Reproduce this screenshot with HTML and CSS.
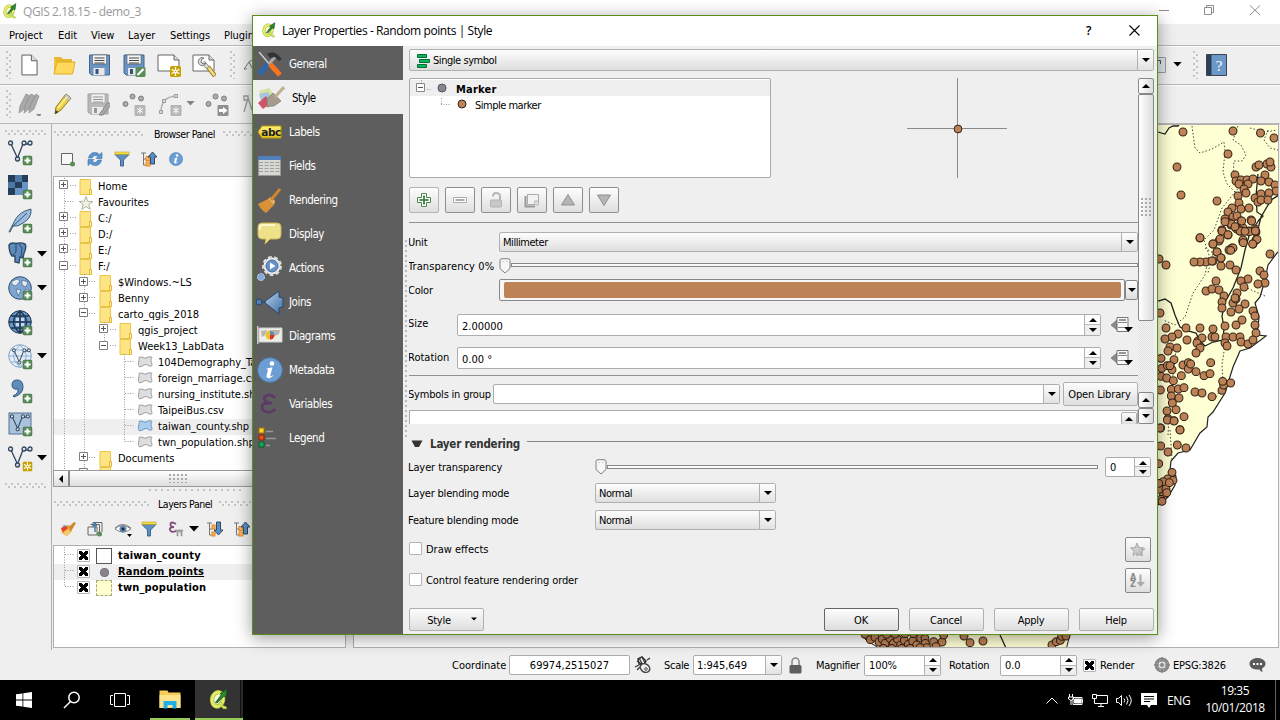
FILE: index.html
```html
<!DOCTYPE html>
<html lang="en">
<head>
<meta charset="utf-8">
<title>QGIS 2.18.15 - demo_3</title>
<link rel="stylesheet" href="styles.css">
</head>
<body>
<svg class="defs" width="0" height="0">
<defs>
<linearGradient id="gb" x1="0" y1="0" x2="1" y2="1"><stop offset="0" stop-color="#b9d4ec"/><stop offset="1" stop-color="#3d6ea5"/></linearGradient>
<linearGradient id="gy" x1="0" y1="0" x2="0" y2="1"><stop offset="0" stop-color="#fff27a"/><stop offset="1" stop-color="#e0c020"/></linearGradient>
<symbol id="qgis" viewBox="0 0 16 16"><ellipse cx="7" cy="8.300" rx="4" ry="5.200" transform="rotate(12 7 8.300)" fill="#fbfcea" stroke="#a9b83c" stroke-width="3.200"/><ellipse cx="7" cy="8.300" rx="4" ry="5.200" transform="rotate(12 7 8.300)" fill="none" stroke="#e2ee66" stroke-width="2.200"/><path d="m8 11 3 4h2.500l-.5-1.500-2-.5-1.500-3z" fill="#e2ee66" stroke="#a9b83c" stroke-width=".6"/><path d="m5.500 10.500 4.500-6-1.200-.4 5-3.400-.8 6-1.300-.8-5 5z" fill="#2b8a2e" stroke="#14501a" stroke-width=".6"/></symbol>
<symbol id="plus" viewBox="0 0 10 10"><rect x=".5" y=".5" width="9" height="9" rx="1.500" fill="#5a8c5a" stroke="#477747"/><path d="M5 2v6M2 5h6" stroke="#fff" stroke-width="2"/></symbol>
<symbol id="sun" viewBox="0 0 10 10"><rect width="10" height="10" rx="1.500" fill="#c8a000"/><path d="M5 1v8M1.500 3l7 4M8.500 3l-7 4" stroke="#fff" stroke-width="1.200"/><circle cx="5" cy="5" r="1.200" fill="#c8a000" stroke="#fff"/></symbol>
<symbol id="folder" viewBox="0 0 14 16"><path d="M1 .5h10.500v10h1v5H1z" fill="#ffe484" stroke="#e8c44a"/><path d="M10.500 10.500h2v5h-2z" fill="#ffeea8" stroke="#e3b93a"/></symbol>
<symbol id="poly" viewBox="0 0 16 12"><path d="M2 1.500c3-2 5 2 8 0 2-1 4-1 5 0-2 3 0 5 0 8-2 2-4-1-6-1-3 0-4 3-7 2C0 8 3 4 2 1.500z"/></symbol>
<symbol id="floppy" viewBox="0 0 22 22"><path d="M1 1h20v20H3l-2-2z" fill="#6b94c4" stroke="#44648c"/><rect x="4" y="1" width="14" height="9" fill="#f4f4f4" stroke="#555" stroke-width=".6"/><path d="M6 4h10M6 6.500h10M6 9h10" stroke="#444"/><rect x="5" y="14" width="11" height="7" fill="#e8e8e8"/><rect x="7" y="15" width="3" height="5" fill="#34527a"/></symbol>
<symbol id="page" viewBox="0 0 18 23"><path d="M1 1h10l6 6v15H1z" fill="#fff" stroke="#555"/><path d="M11 1v6h6" fill="#ddd" stroke="#555"/></symbol>
<symbol id="funnel" viewBox="0 0 16 16"><path d="M1 3.500 6.500 9v6h3V9L15 3.500z" fill="#6090c0" stroke="#3d658f"/><rect x="1" y="1" width="14" height="2.500" fill="#f4dd46" stroke="#b8a020" stroke-width=".6"/></symbol>
<symbol id="info" viewBox="0 0 26 26"><circle cx="13" cy="13" r="12.300" fill="#6d9ed3" stroke="#4c7db4"/><circle cx="15" cy="6.500" r="2.300" fill="#fff"/><path d="M9 12c3-1 4-1.500 6.500-1.500l-2.200 8c0 2 2 0 3-.5-1 3-7.500 5-6.800.5l1.500-6z" fill="#fff"/></symbol>
<symbol id="vec" viewBox="0 0 26 26"><g fill="none" stroke="#33475e" stroke-width="1.300"><path d="M3 4 9.500 18 15 4h6"/><circle cx="2.500" cy="3" r="2" fill="#dce6ef"/><circle cx="9.500" cy="19" r="2" fill="#dce6ef"/><circle cx="16" cy="3" r="2" fill="#dce6ef"/><circle cx="22" cy="3" r="2" fill="#dce6ef"/></g></symbol>
<symbol id="globe" viewBox="0 0 24 24"><circle cx="12" cy="12" r="11.300" fill="#7fa6d0" stroke="#31506f"/></symbol>
<symbol id="tri" viewBox="0 0 10 6"><path d="M0 0h10L5 5.500z" fill="#000"/></symbol>
<symbol id="up" viewBox="0 0 8 4"><path d="M0 4h8L4 0z" fill="#000"/></symbol>
<symbol id="dn" viewBox="0 0 8 4"><path d="M0 0h8L4 4z" fill="#000"/></symbol>
<symbol id="treeup" viewBox="0 0 16 16"><path d="M0 2h5M2.500 2v12h3M2.500 8h3" fill="none" stroke="#777"/><rect x="5" y="5.500" width="4" height="4" fill="#f7b060" stroke="#e98a20"/><rect x="5" y="11" width="4" height="4" fill="#f7b060" stroke="#e98a20"/><path d="M11.500 1 16 6h-2.500v7h-4V6H7z" fill="#5c8dc0" stroke="#2d4a6d"/></symbol>
<symbol id="treedn" viewBox="0 0 16 16"><path d="M0 2h5M2.500 2v12h3M2.500 8h3" fill="none" stroke="#777"/><rect x="5" y="4" width="3" height="4" fill="#f7b060" stroke="#e98a20"/><rect x="5" y="11" width="3" height="4" fill="#f7b060" stroke="#e98a20"/><path d="M11.500 14 16 9h-2.500V1h-4v8H7z" fill="#5c8dc0" stroke="#2d4a6d"/></symbol>
<symbol id="ddef" viewBox="0 0 22 18"><path d="M0 9l6-5v10z" fill="#8a8a8a" stroke="#666" stroke-width=".6"/><path d="M6 1.500h11v14H6z" fill="#fafafa" stroke="#777"/><path d="M7 6.500h9M7 11.500h6" stroke="#888"/><path d="M8 4h7" stroke="#777" stroke-width="1.500"/><path d="M13 11h9l-4.500 5z" fill="#000"/></symbol>
<symbol id="handle" viewBox="0 0 12 16"><path d="M1 2.500Q1 .7 3 .7h6q2 0 2 1.800v8L6 15 1 10.500z" fill="#f6f6f6" stroke="#808080"/><path d="M3.500 3.500h1M7.500 3.500h1" stroke="#aaa"/></symbol>
<marker id="pt" viewBox="0 0 10 10" markerWidth="9.600" markerHeight="9.600" refX="5" refY="5" markerUnits="userSpaceOnUse"><circle cx="5" cy="5" r="4.100" fill="#bd8255" stroke="#35241a" stroke-width="1.100"/></marker>
<marker id="pt3" viewBox="0 0 10 10" markerWidth="28.800" markerHeight="28.800" refX="5" refY="5" markerUnits="userSpaceOnUse"><circle cx="5" cy="5" r="4.100" fill="#bd8255" stroke="#35241a" stroke-width="1.100"/></marker>
</defs>
</svg>

<header class="titlebar">
  <svg class="i16"><use href="#qgis"/></svg><span>QGIS 2.18.15 - demo_3</span>
  <svg class="winctl" viewBox="0 0 110 20" fill="none" stroke="#8c8c8c"><path d="M3 9.500h10M48.500 6.500h7v7h-7zM50.500 6V4.500h7v7H56M94 4.500l10 9.500M104 4.500 94 14"/></svg>
</header>
<nav class="menubar"><span>Project</span><span>Edit</span><span>View</span><span>Layer</span><span>Settings</span><span>Plugins</span></nav>

<div class="toolbar t1">
  <i class="vgrip"></i>
  <svg viewBox="0 0 24 24"><use href="#page" x="4" y="1" width="17" height="22"/></svg>
  <svg viewBox="0 0 24 24"><path d="M2 4h7l2 2h9v3H2z" fill="#e8b830"/><path d="M2 4v17h18V10H5z" fill="#f2c440"/><path d="M2 21 5 9h18l-2.500 12z" fill="#ffd95c" stroke="#e0ac24"/></svg>
  <svg viewBox="0 0 24 24"><use href="#floppy" x="1.500" y="1" width="22" height="22"/></svg>
  <svg viewBox="0 0 24 24"><use href="#floppy" x="1" y="1" width="22" height="22"/><rect x="13.500" y="14" width="10" height="10" rx="1.500" fill="#5a8c5a"/><path d="m15.500 22 6-6" stroke="#fff" stroke-width="2.200"/></svg>
  <svg viewBox="0 0 24 24"><path d="M1 2h16l5 5v11H1z" fill="#fff" stroke="#666"/><path d="M17 2v5h5" fill="#ddd" stroke="#666"/><use href="#sun" x="13" y="13" width="11" height="11"/></svg>
  <svg viewBox="0 0 24 24"><path d="M1 2h16l5 5v11H1z" fill="#fff" stroke="#666"/><path d="M17 2v5h5" fill="#ddd" stroke="#666"/><path d="m11 9 5 6" stroke="#888" stroke-width="4"/><path d="m11 9 5 6" stroke="#ddd" stroke-width="2.500"/><path d="M12 5a4 4 0 1 0 2 5l-3 1-2-2 1-3z" fill="#ddd" stroke="#777"/><path d="m16 14 7 9" stroke="#9a8030" stroke-width="4.500"/><path d="m16.500 14.500 6 8" stroke="#f2dd80" stroke-width="2.500"/></svg>
  <i class="vgrip"></i>
  <svg class="edge" viewBox="0 0 24 24"><path d="M4 16 9 9l3 6M4 16h3M9 9l5-3" fill="none" stroke="#777"/></svg>
  <div class="tbright">
    <svg class="cut" viewBox="0 0 8 16"><path d="M-4 .5H7.500v15H-4z" fill="#dfe5ea" stroke="#99a"/><path d="M0 3.500h2.500V7" fill="none" stroke="#555"/></svg>
    <svg class="arr"><use href="#tri"/></svg><i class="vgrip"></i>
    <svg class="book" viewBox="0 0 21 22"><path d="M.5.5h20v21H.5z" fill="#6b98c9" stroke="#3b4450"/><path d="M1 1h4.500v20H1z" fill="#2c3e50"/><text x="13" y="17" text-anchor="middle" class="bookq">?</text></svg>
  </div>
</div>
<div class="toolbar t2">
  <i class="vgrip"></i>
  <svg viewBox="0 0 24 24"><g fill="#a9a9a9" stroke="#8b8b8b" stroke-width=".7"><path d="M9 2 3 14l-1 7 5-4L13 4z"/><path d="m14 2-6 12-1 7 5-4 6-13z"/><path d="m19 2-6 12-1 7 5-4 5-13z"/></g><path d="M19 22h6l-3 3z" fill="#888"/></svg>
  <svg viewBox="0 0 24 24"><path d="M16 2 6 15l-1 7 6-4 10-12z" fill="#ecd24a" stroke="#8d7b20"/><path d="m16 2 5 4-2 3-5-4z" fill="#ccc" stroke="#888" stroke-width=".6"/><path d="m5 22 .6-4 3 2z" fill="#444"/><path d="m8 16 9-11" stroke="#fff08a" stroke-width="1.500"/></svg>
  <svg viewBox="0 0 24 24"><g class="off"><use href="#floppy" x="1" y="1" width="22" height="22"/></g><path d="m13 23 9-13 3 3-8 10z" fill="#a8a8a8" stroke="#888"/></svg>
  <svg viewBox="0 0 24 24"><g fill="#aaa" stroke="#7e7e7e"><circle cx="3.500" cy="12" r="2.500"/><circle cx="10.500" cy="4.500" r="2.500"/><circle cx="19" cy="6.500" r="2.500"/></g><rect x="12.500" y="13" width="11" height="11" rx="1" fill="#b5b5b5"/><path d="M18 15v7M15 16.500l6 4M21 16.500l-6 4" stroke="#fff"/></svg>
  <svg viewBox="0 0 24 24"><path d="M3 20Q3 5 18 4" fill="none" stroke="#b0b0b0" stroke-width="1.500"/><g fill="#ddd" stroke="#999"><path d="M1.500 18.500h3v3h-3zM4.500 7.500h3v3h-3zM16.500 2.500h3v3h-3z"/></g><rect x="12.500" y="13" width="11" height="11" rx="1" fill="#b5b5b5"/><path d="M18 15v7M15 16.500l6 4M21 16.500l-6 4" stroke="#fff"/></svg>
  <svg class="arr gray"><use href="#tri"/></svg>
  <svg viewBox="0 0 24 24"><g fill="#aaa" stroke="#7e7e7e"><circle cx="3.500" cy="12" r="2.500"/><circle cx="10.500" cy="4.500" r="2.500"/><circle cx="19" cy="6.500" r="2.500"/></g><rect x="12.500" y="13" width="11" height="11" rx="1" fill="#909090"/><path d="M14 18.500h5" stroke="#fff" stroke-width="3"/><path d="m18 15 4.500 3.500L18 22z" fill="#fff"/></svg>
  <svg class="edge2" viewBox="0 0 24 24"><path d="M3 20 7 6l4 12M3 4h4v4H3zM12 4l3 8" fill="none" stroke="#999" stroke-width="1.300"/></svg>
</div>

<main class="work">
  <aside class="lefttools">
    <i class="hgrip"></i>
    <div><svg viewBox="0 0 26 26"><use href="#vec" width="26" height="26"/><use href="#plus" x="14.500" y="15.500" width="10" height="10"/></svg></div>
    <div><svg viewBox="0 0 26 26"><path d="M0 1h20v20H0z" fill="#6795c6"/><path d="M0 1h7v7H0zM14 1h6v7h-6zM7 8h7v6H7zM0 14h7v7H0z" fill="#263e59"/><path d="M7 1h7v7H7zM0 8h7v6H0z" fill="#4d77a5"/><use href="#plus" x="14.500" y="15.500" width="10" height="10"/></svg></div>
    <div><svg viewBox="0 0 26 26"><path d="M1 24 6 14Q10 4 23 1 24 10 15 15 10 19 5 18L2 24z" fill="#9bbcdd" stroke="#3c5b7c"/><path d="M4 19 19 5" stroke="#3c5b7c"/><use href="#plus" x="14.500" y="15.500" width="10" height="10"/></svg></div>
    <div><svg viewBox="0 0 26 26"><path d="M1 3Q3 0 8 1.500 13 0 17 2q2 3-1 9l-1 5-3-1-1 6-4-1V14l-3 0Q1 10 1 3z" fill="#5d8cbd" stroke="#2d4764" stroke-width="1.400"/><path d="M8 2v8l-3 3M11 2l3 4-1 9" fill="none" stroke="#2d4764"/><use href="#plus" x="14.500" y="15.500" width="10" height="10"/></svg><svg class="arr"><use href="#tri"/></svg></div>
    <div><svg viewBox="0 0 26 26"><use href="#globe" y="0" width="24" height="24"/><path d="m3 6 6-3 3 2-4 5-3-1zM14 4l6 2-2 5-4-2zM8 13l5 1-3 6zM17 13l4 1-3 5z" fill="#e4ebf2" stroke="#46688f" stroke-width=".7"/><use href="#plus" x="14.500" y="14.500" width="10" height="10"/></svg><svg class="arr"><use href="#tri"/></svg></div>
    <div><svg viewBox="0 0 26 26"><circle cx="12" cy="12" r="11.300" fill="#6795c6" stroke="#20354d"/><path d="M1 12h22M3 6h18M3 18h18M12 1v22M12 1Q-1 12 12 23M12 1q13 11 0 22" fill="none" stroke="#20354d" stroke-width="1.500"/><path d="M8 8h3v3H8zM13 8h3v3h-3zM8 13h3v3H8zM13 13h3v3h-3z" fill="#c7d9ec"/><use href="#plus" x="14.500" y="15.500" width="10" height="10"/></svg></div>
    <div><svg viewBox="0 0 26 26"><circle cx="12" cy="12" r="11.300" fill="#e4edf6" stroke="#7ca2c8"/><path d="M1 12h22M3 6h18M3 18h18M12 1Q-1 12 12 23M12 1q13 11 0 22" fill="none" stroke="#8eb2d6"/><use href="#vec" x="4" y="4" width="20" height="20"/><use href="#plus" x="14.500" y="15.500" width="10" height="10"/></svg><svg class="arr"><use href="#tri"/></svg></div>
    <div><svg viewBox="0 0 26 26"><path d="M5 18q6-3 5-7-6 1-6-4 0-5 5-5 6 0 6 7 0 7-9 10z" fill="#5d8cbd" stroke="#34577c"/><use href="#plus" x="14.500" y="15.500" width="10" height="10"/></svg></div>
    <div><svg viewBox="0 0 26 26"><rect x="1" y="1" width="22" height="21" fill="#a9c3dd" stroke="#56718d"/><use href="#vec" x="2" y="2" width="21" height="21"/><use href="#plus" x="14.500" y="14.500" width="10" height="10"/></svg></div>
    <div><svg viewBox="0 0 26 26"><use href="#vec" width="26" height="26"/><use href="#sun" x="14.500" y="15.500" width="10" height="10"/></svg><svg class="arr"><use href="#tri"/></svg></div>
    <i class="hgrip last"></i>
  </aside>

  <section class="panels">
    <div class="ptitle"><i class="hgrip"></i><span>Browser Panel</span><i class="hgrip"></i></div>
    <div class="ptools">
      <svg viewBox="0 0 16 16"><path d="M1.500 2.500h11v11h-11z" fill="#f7f7f7" stroke="#666"/><circle cx="12.500" cy="13" r="2.500" fill="#5a8c5a"/></svg>
      <svg viewBox="0 0 16 16"><path d="M1.500 7q1-5.500 6.500-5.500 3 0 4.500 2L15 1.500v6H9l2-2Q7 3 5 7zM14.500 9q-1 5.500-6.500 5.500-3 0-4.500-2L1 14.500v-6h6l-2 2q4 2.500 6-1.500z" fill="#5c94cf" stroke="#3b6ea5" stroke-width=".6"/></svg>
      <svg viewBox="0 0 16 16"><use href="#funnel"/></svg>
      <svg viewBox="0 0 16 16"><use href="#treeup"/></svg>
      <svg viewBox="0 0 16 16"><use href="#info" x="1" y="1" width="14" height="14"/></svg>
    </div>
    <div class="tree browser">
      <svg class="guides" viewBox="54 177 200 293"><g fill="none" stroke="#999" stroke-dasharray="1 1.500"><path d="M64.500 178v292M84.500 274v196M104.500 322v24M124.500 354v88M70 185.500h6M65 201.500h10M70 217.500h6M70 233.500h6M70 249.500h6M70 265.500h6M89 281.500h6M89 297.500h6M89 313.500h6M110 329.500h6M110 345.500h6M125 361.500h10M125 377.500h10M125 393.500h10M125 409.500h10M125 425.500h10M125 441.500h10M89 457.500h6"/></g>
      <g fill="#fff" stroke="#808080"><path d="M59.500 180.500h8v8h-8zM59.500 212.500h8v8h-8zM59.500 228.500h8v8h-8zM59.500 244.500h8v8h-8zM59.500 261.500h8v8h-8zM79.500 277.500h8v8h-8zM79.500 293.500h8v8h-8zM79.500 308.500h8v8h-8zM99.500 324.500h8v8h-8zM99.500 341.500h8v8h-8zM79.500 452.500h8v8h-8zM79.500 468.500h8v8h-8z"/></g>
      <path fill="none" stroke="#555" d="M61 184.500h5M63.500 182v5M61 216.500h5M63.500 214v5M61 232.500h5M63.500 230v5M61 248.500h5M63.500 246v5M61 265.500h5M81 281.500h5M83.500 279v5M81 297.500h5M83.500 295v5M81 312.500h5M101 328.500h5M103.500 326v5M101 345.500h5M81 456.500h5M83.500 454v5"/></svg>
      <div class="r l0"><svg><use href="#folder"/></svg><span>Home</span></div>
      <div class="r l0"><svg class="star" viewBox="0 0 14 14"><path d="m7 .5 1.800 4.800 5 .2-4 3 1.500 5L7 10.500l-4.300 3 1.500-5-4-3 5-.2z" fill="#eef0e4" stroke="#b0b4a0"/></svg><span>Favourites</span></div>
      <div class="r l0"><svg><use href="#folder"/></svg><span>C:/</span></div>
      <div class="r l0"><svg><use href="#folder"/></svg><span>D:/</span></div>
      <div class="r l0"><svg><use href="#folder"/></svg><span>E:/</span></div>
      <div class="r l0"><svg><use href="#folder"/></svg><span>F:/</span></div>
      <div class="r l1"><svg><use href="#folder"/></svg><span>$Windows.~LS</span></div>
      <div class="r l1"><svg><use href="#folder"/></svg><span>Benny</span></div>
      <div class="r l1"><svg><use href="#folder"/></svg><span>carto_qgis_2018</span></div>
      <div class="r l2"><svg><use href="#folder"/></svg><span>qgis_project</span></div>
      <div class="r l2"><svg><use href="#folder"/></svg><span>Week13_LabData</span></div>
      <div class="r l3"><svg><use href="#poly"/></svg><span>104Demography_Taiwan</span></div>
      <div class="r l3"><svg><use href="#poly"/></svg><span>foreign_marriage.csv</span></div>
      <div class="r l3"><svg><use href="#poly"/></svg><span>nursing_institute.shp</span></div>
      <div class="r l3"><svg><use href="#poly"/></svg><span>TaipeiBus.csv</span></div>
      <div class="r l3 sel"><svg><use href="#poly"/></svg><span>taiwan_county.shp</span></div>
      <div class="r l3"><svg><use href="#poly"/></svg><span>twn_population.shp</span></div>
      <div class="r l1"><svg><use href="#folder"/></svg><span>Documents</span></div>
      <div class="r l1"><svg><use href="#folder"/></svg><span>Downloads</span></div>
    </div>
    <div class="hscroll"><b><svg viewBox="0 0 4 8"><path d="M4 0v8L0 4z"/></svg></b><b class="thumb"><i class="hdots"></i></b></div>
    <div class="splith"><i class="hgrip"></i></div>
    <div class="ptitle lay"><i class="hgrip"></i><span>Layers Panel</span><i class="hgrip"></i></div>
    <div class="ptools lt">
      <svg viewBox="0 0 16 16"><path d="m1 7 7-3 4 6-5 5-5-3z" fill="#f0a030"/><path d="m1 7 5-2 2 2-5 4z" fill="#e5402c"/><path d="m3 12 5-4 3 3-4 4z" fill="#f7c86c"/><path d="m8 4 3 6 2-3 3-5-2-1-4 4z" fill="#cf8630"/><path d="m2 5 3-1 2 1-3 1z" fill="#6795c6"/></svg>
      <svg viewBox="0 0 16 16"><path d="M1 6h9v8H1zM3.500 3.500h9v8M6 6V1.500h9V11" fill="none" stroke="#666"/><path d="M8 11V3M6 5l2-3 2 3" fill="none" stroke="#4a7aaa" stroke-width="1.500"/><circle cx="12.500" cy="13" r="2.500" fill="#5a8c5a"/></svg>
      <svg class="eye" viewBox="0 0 18 16"><path d="M1 8Q8 1 17 8 9 14 1 8z" fill="#fff" stroke="#888"/><circle cx="9" cy="8" r="3.500" fill="#5f88b3"/><circle cx="9" cy="8" r="1.500" fill="#223"/><path d="M1 7Q8 0 17 7" fill="none" stroke="#777"/><path d="M13 13h5l-2.500 3z"/></svg>
      <svg viewBox="0 0 16 16"><use href="#funnel"/></svg>
      <svg viewBox="0 0 16 16"><path d="M8 3Q3 0 2.500 3T6 6Q1 6 2 9t6 1" fill="none" stroke="#7d4c7c" stroke-width="1.800"/><path d="M7 9h8l-1 2v4h-1v-4h-3v4H9v-4z" fill="#aaa" stroke="#888" stroke-width=".6"/></svg>
      <svg class="arr"><use href="#tri"/></svg>
      <svg viewBox="0 0 16 16"><use href="#treedn"/></svg>
      <svg viewBox="0 0 16 16"><use href="#treeup"/></svg>
    </div>
    <div class="tree layers">
      <svg class="guides" viewBox="54 547 200 100"><path d="M64.500 548v39.500M65 555.500h9M65 571.500h9M65 587.500h9" fill="none" stroke="#999" stroke-dasharray="1 1.500"/></svg>
      <div class="r"><i class="chk on"></i><em class="sw white"></em><span>taiwan_county</span></div>
      <div class="r sel"><i class="chk on"></i><em class="sw dot"></em><span><u>Random points</u></span></div>
      <div class="r"><i class="chk on"></i><em class="sw yel"></em><span>twn_population</span></div>
    </div>
  </section>

  <section class="map">
    <svg viewBox="354 125 924 523" width="924" height="523">
      <path fill="#ffffd4" stroke="#222" stroke-width="1.200" d="M1140 110H1290V240L1277 253 1268 265 1265 280 1260 297 1255 303 1259 317 1257 335 1266 336 1250 348 1240 351 1233 367 1225 393 1213 412 1208 417 1207 427 1200 433 1190 450 1178 453 1171 461 1170 470 1176 476 1175 485 1168 497 1158 505H1100z"/>
      <path fill="#ffffd4" stroke="#222" d="M858 630l8 10 16 10h184l5-20z"/>
      <g fill="none" stroke="#222" stroke-width="1.300"><path d="M1158 132l7 2 4-6 4-2 5 0 2-3M1158 301l7-2 6 4 4 12 5 12 8 4 8 2 4 8 5 5 8-4 10-2 1-12-2-12 3-14 8-14 8-20 4-18 4-14 6-10 4-6 4-4-6-4-1-16 2-22M1279 195l-8 5-10 17-5 20M1000 635l6 13"/></g>
      <g fill="none" stroke="#444" stroke-dasharray="1.500 2"><path d="M1192 126l3 22 5 5 12-4 12-7 1 10-2 20 4 12 8 8M1238 126l-5 14 8 5 5 10-4 6h-8l-1 15 3 10M1250 128l15 4 12-2M1268 130l-4 10 6 8 8 2M1240 186l-18 22-8 22-10 10 5 15-4 20-12 18-8 24-10 8-12-5M1205 248l8 5-5 20M1225 345l-3 20 1 20-8 14M1170 430l2 30M1176 350l-6 50-2 35M1265 296l-18-8-10-8"/></g>
      <path class="pts" d="M1183 132L1233 131L1260.500 133L1274 138L1228 154L1177 167L1181 195L1217 201L1256 167L1259 165L1267 164L1271 167L1270 162L1235 175L1236 181L1241 180L1247 180L1253 179L1265 175L1261 181L1269 182L1275 185L1276 191L1239 184L1248 184L1244 189L1246 193L1238 196L1255 198L1261 194L1269 193L1258 202L1261 200L1268 200L1239 203L1232 208L1228 212L1241 209L1249 208L1225 219L1233 217L1237 216L1241 221L1231 224L1251 220L1222 230L1236 228L1243 228L1255 229L1200 238L1213 244L1219 241L1222 231L1230 223L1231 225L1237 229L1242 231L1249 231L1256 232L1255 231L1228 235L1243 241L1243 242L1253 244L1256 240L1240 231L1217 252L1232 248L1229 250L1221 258L1213 261L1206 262L1200 262L1194 262L1212 261L1221 266L1230 265L1236 270L1159 259L1166 265L1270 254L1260 271L1264 275L1265 283L1258 284L1248 279L1241 281L1244 287L1237 293L1216 281L1206 291L1212 289L1219 290L1224 296L1222 302L1233 303L1236 299L1235 298L1245 304L1239 309L1231 312L1222 308L1253 311L1255 316L1242 320L1236 325L1225 326L1255 325L1256 333L1160 313L1166 328L1186 328L1200 328L1213 329L1178 334L1172 337L1165 339L1187 340L1198 341L1202 338L1212 337L1215 337L1226 337L1233 337L1240 337L1241 342L1248 344L1253 340L1225 343L1227 346L1197 343L1200 348L1196 353L1170 347L1177 348L1168 351"/>
      <g transform="translate(1060 220) scale(.33333)"><path class="pts3" d="M303 415L305 445L322 437L342 419L336 449L330 437L303 469L320 474L340 482L364 467L369 435L385 428L385 447L392 432L408 455L432 467L450 461L452 428L301 510L334 508L355 507L372 503L334 528L357 534L405 516L426 519L456 530L486 511L491 495L512 489L488 484L337 549L321 573L348 569L324 596L342 602L372 590L302 624L360 629M486 33L514 12L540 33L525 20L568 35L586 33L504 44L549 60L591 58L578 72L550 68L420 53L480 57L459 72L519 84L512 91L471 96L483 114M495 5L545 3L575 3L555 34"/></g>
      <g transform="translate(1100 420) scale(.33333)"><path class="pts3" d="M202 0L222 3L240 30L180 24L182 78L204 96L232 75L258 84L176 131L216 157L203 177L219 181L190 185L178 208L198 207L190 228L183 238L208 188L176 190L200 218L186 244"/></g>
      <g transform="translate(780 430) scale(.33333)"><path class="pts3" d="M255 613L271 629L285 622L297 636L307 627L315 640L330 625L340 640L352 627L362 645L373 631L385 643L398 633L410 645L422 624L435 625L436 640L461 635L486 636L491 615L468 650L440 653L420 653L390 655L365 655L335 655L310 655L320 613L345 612L375 611L400 611L552 618L570 638L609 633L816 645L829 635L841 631L845 619L858 618"/></g>
    </svg>
  </section>
</main>

<footer class="status">
  <span class="s1">Coordinate</span><div class="field coord">69974,2515027</div>
  <svg class="s2" viewBox="0 0 18 18"><path d="m4 3 4-2 4 4-3 5-4-2z" fill="#fff" stroke="#333" stroke-width="1.500"/><path d="m5 2 4 7M3 5l6 4M8 1l3 6M1 11l4-2M13 4l3-2M3 14l3-3" stroke="#333" stroke-width="1.300"/><ellipse cx="11" cy="12" rx="5" ry="4" transform="rotate(35 11 12)" fill="#eee" stroke="#444" stroke-width="1.500"/><circle cx="12" cy="13" r="1.300" fill="none" stroke="#555"/></svg>
  <span class="s3">Scale</span><div class="field combo scale"><span>1:945,649</span><b><svg><use href="#dn"/></svg></b></div>
  <svg class="s4" viewBox="0 0 13 17"><path d="M3 8V4.500a3.500 3.500 0 0 1 7 0V8" fill="none" stroke="#888" stroke-width="1.500"/><rect x=".5" y="8" width="12" height="8.500" rx="1.500" fill="#5e5e5e"/></svg>
  <span class="s5">Magnifier</span><div class="field spin mag"><span>100%</span><b><svg><use href="#up"/></svg><svg><use href="#dn"/></svg></b></div>
  <span class="s6">Rotation</span><div class="field spin rot"><span>0.0</span><b><svg><use href="#up"/></svg><svg><use href="#dn"/></svg></b></div>
  <i class="chk on"></i><span class="s7">Render</span>
  <svg class="s8" viewBox="0 0 16 16"><circle cx="8" cy="8" r="6.500" fill="#bbb" stroke="#888" stroke-width="2"/><path d="M8 0v16M0 8h16M4 4h8v8H4z" fill="none" stroke="#777"/><circle cx="8" cy="8" r="3" fill="none" stroke="#eee"/></svg>
  <span class="s9">EPSG:3826</span>
  <svg class="s10" viewBox="0 0 17 14"><path d="M8.500 0C4 0 .5 2.500.5 5.700s3 5.500 7 5.700h3q1 2 3 2.500l-.5-3.500c2-1 3.500-2.500 3.500-4.700C16.500 2.500 13 0 8.500 0z" fill="#5c5c5c"/><path d="M4 6h2M7.500 6h2M11 6h2" stroke="#fff" stroke-width="2"/></svg>
</footer>

<div class="taskbar">
  <div class="tb"><svg width="16" height="16" viewBox="0 0 16 16" fill="#fff"><path d="M0 2.300 6.500 1.400v6.100H0zM7.300 1.300 16 0v7.500H7.300zM0 8.400h6.500v6.200L0 13.700zM7.300 8.400H16V16l-8.700-1.200z"/></svg></div>
  <div class="tb"><svg width="18" height="18" viewBox="0 0 18 18" fill="none" stroke="#fff" stroke-width="1.500"><circle cx="11" cy="6.500" r="5.200"/><path d="M7.500 10.500 1 17"/></svg></div>
  <div class="tb"><svg width="20" height="16" viewBox="0 0 20 16" fill="none" stroke="#fff"><path d="M4.500 1.500h11v13h-11zM3 3.500H.5v9H3M17 3.500h2.500v9H17"/></svg></div>
  <div class="tb exp"><svg width="22" height="19" viewBox="0 0 22 19"><path d="M.5.500h8l1 2h12V18H.5z" fill="#f5cc55"/><path d="M.5 5h21v13H.5z" fill="#ffe28c"/><path d="M4.500 11h13v7.500h-4V15h-5v3.500h-4z" fill="#1fb0ea"/></svg></div>
  <div class="tb qg"><svg width="22" height="24"><use href="#qgis"/></svg></div>
  <div class="tray">
    <svg width="12" height="7" viewBox="0 0 12 7" fill="none" stroke="#fff"><path d="m.5 6.500 5.500-5.500 5.500 5.500"/></svg>
    <svg width="16" height="12" viewBox="0 0 16 12" fill="none" stroke="#fff"><path d="M5 3.500h9v7H5z"/><path d="M6.500 5H13v4H6.500zM14.500 5.500v3" fill="#fff"/><path d="M1.500 0v3M4.500 0v3M.5 3h5v2L3 6.500.5 5zM3 6v5"/></svg>
    <svg width="16" height="13" viewBox="0 0 16 13" fill="none" stroke="#fff"><path d="M5 1.500h10.500v8H2.500V5M.5.500h4v4h-4zM6 12.500h6M9 10v2"/></svg>
    <svg width="17" height="13" viewBox="0 0 17 13" fill="none" stroke="#fff"><path d="M.5 4.500h2l3-3v10l-3-3h-2zM8 4.500q1.500 2 0 4M10.500 2.500q3 4 0 8M13 1q4.500 5.500 0 11"/></svg>
    <svg width="16" height="15" viewBox="0 0 16 15"><path d="M0 0h16v12h-6l-2 3-2-3H0z" fill="#fff"/><path d="M3 3.500h10M3 6h10M3 8.500h6" stroke="#000"/></svg>
    <span class="eng">ENG</span>
    <div class="clock"><span>19:35</span><span>10/01/2018</span></div><i class="peek"></i>
  </div>
</div>

<div class="dialog">
  <div class="dtitle"><svg class="i16"><use href="#qgis"/></svg><span>Layer Properties - Random points | Style</span><b>?</b><svg class="x" viewBox="0 0 11 11"><path d="m.5.500 10 10M10.500.500l-10 10" stroke="#000" stroke-width="1.100"/></svg></div>
  <div class="dbody">
    <nav class="side">
      <div><svg viewBox="0 0 26 26"><path d="m2 1 12 14" stroke="#ccc" stroke-width="1.500"/><path d="m18 6-8 9" stroke="#aaa" stroke-width="3"/><path d="M10 3q6-4 11 1l4 4-3 2-4-4-5 1z" fill="#333"/><path d="m11 13-9 10" stroke="#2f66a8" stroke-width="5"/><path d="m13 13 10 11" stroke="#f5741c" stroke-width="5"/></svg>General</div>
      <div class="cur"><svg viewBox="0 0 28 26"><path d="m2 6 10-3 6 8-12 4z" fill="#d5e2a0"/><path d="M2 9l9-2 4 6-10 6z" fill="#a5c5e0"/><path d="m1 18 8-7 5 7-8 6z" fill="#d05468"/><path d="m10 14 6-6 8 8-7 5q-4 0-7 1z" fill="#a59c8e" stroke="#80776b" stroke-width=".7"/><path d="m18 12 9-10" stroke="#c3ae91" stroke-width="3"/></svg>Style</div>
      <div><svg viewBox="0 0 26 26"><path d="m1 13 4-6h19v12H5z" fill="url(#gy)" stroke="#b8a000"/><text x="14" y="16.500" text-anchor="middle" class="abc">abc</text></svg>Labels</div>
      <div><svg viewBox="0 0 26 26"><path d="M1.500 3.500h22v19h-22z" fill="#d7dad4" stroke="#999"/><path d="M1 3h23v4H1z" fill="#4f7fbd"/><path d="M2 9.500h21M2 12.500h21M2 15.500h21M2 18.500h21" stroke="#9da19a" stroke-dasharray="4 1.500"/></svg>Fields</div>
      <div><svg viewBox="0 0 26 26"><path d="m1 17 10-5 6 6-8 8q-5-3-8-9z" fill="#d99238"/><path d="m11 12 6 6 1-4-4-4z" fill="#f0b45c"/><path d="m14 13 9-11" stroke="#cd852e" stroke-width="3"/></svg>Rendering</div>
      <div><svg viewBox="0 0 26 26"><path d="M5 2h15q4 0 4 4v8q0 4-4 4h-7l-5 5 1-5H5q-4 0-4-4V6q0-4 4-4z" fill="#efe08a" stroke="#cdb957"/><path d="M3 9V6q0-2 3-2h12" fill="none" stroke="#fff8cc" stroke-width="2"/></svg>Display</div>
      <div><svg viewBox="0 0 26 26"><circle cx="15" cy="11" r="8.500" fill="#f1f1f1" stroke="#ddd" stroke-width="3" stroke-dasharray="3.500 2.500"/><circle cx="15" cy="11" r="6" fill="#6694c8" stroke="#44689a"/><path d="m13 7.500 5.500 3.500-5.500 3.500z" fill="#fff"/><circle cx="4" cy="22" r="3.500" fill="#7facdc" stroke="#ddd" stroke-dasharray="2 1"/></svg>Actions</div>
      <div><svg viewBox="0 0 28 26"><path d="M8 13 23 2v6l4 1v9l-4 1v6z" fill="url(#gb)" stroke="#27476b"/><circle cx="3" cy="13" r="3" fill="#4c7db4" stroke="#27476b"/><path d="M6 13h4" stroke="#27476b"/></svg>Joins</div>
      <div><svg viewBox="0 0 26 26"><path d="M0 3h1.500v18H0z" fill="#ccc"/><path d="M2 5h23v14H2z" fill="#ededE8" stroke="#ccc"/><path d="m4 8 6-1-2 5-3 2zM15 7l8 0-1 4-4 2z" fill="#b5b5ae"/><circle cx="13" cy="12" r="4.500" fill="#f0c030"/><path d="M13 12V7.500a4.500 4.500 0 0 1 4.500 4.500z" fill="#5d8cbd"/><path d="M13 12h4.500a4.500 4.500 0 0 1-4.500 4.500z" fill="#e03020"/></svg>Diagrams</div>
      <div><svg viewBox="0 0 26 26"><use href="#info" width="26" height="26"/></svg>Metadata</div>
      <div><svg viewBox="0 0 26 26"><path d="M18 7Q14 2 9 5T12 12Q5 12 5 16t5 5 8-3M11 12h4" fill="none" stroke="#5d3a66" stroke-width="2.800"/></svg>Variables</div>
      <div><svg viewBox="0 0 26 26"><path d="M2 3h5v5H2z" fill="#f9d81c" stroke="#b07000"/><path d="M2 10h5v5H2z" fill="#e8501c" stroke="#902000"/><path d="M2 17h5v5H2z" fill="#18a85c" stroke="#055a28"/><path d="M9 6.500h7M9 13.500h10M9 20.500h4" stroke="#999" stroke-width="1.500"/></svg>Legend</div>
    </nav>
    <section class="content">
      <div class="btn combo renderer"><span><svg viewBox="0 0 14 14" fill="#08b85c" stroke="#076b35"><path d="M1.500.500h9v3h-9zM3.500 5.500h10v3h-10zM1.500 10.500h9v3h-9z"/></svg>Single symbol</span><b><svg><use href="#dn"/></svg></b></div>
      <div class="scrollwrap">
        <div class="scrollarea">
          <div class="rowA">
            <div class="symtree">
              <svg class="guides" viewBox="410 79 100 40"><path d="M421.500 80v4M427 89.500h5M441.500 98v7M441 104.500h10" fill="none" stroke="#999" stroke-dasharray="1 1.500"/><path d="M416.500 83.500h8v8h-8z" fill="#fff" stroke="#888"/><path d="M418 87.500h5" stroke="#555"/></svg>
              <div class="r sel"><svg viewBox="0 0 10 10"><circle cx="5" cy="5" r="4" fill="#8e8488" stroke="#48586c"/></svg><b>Marker</b></div>
              <div class="r sub"><svg viewBox="0 0 10 10"><circle cx="5" cy="5" r="4" fill="#bd8255" stroke="#35241a"/></svg><span>Simple marker</span></div>
            </div>
            <svg class="preview" viewBox="0 0 102 100"><path d="M0 50.500h100M50.500 0v100" stroke="#8a8a8a"/><circle cx="51" cy="51" r="3.900" fill="#bd8255" stroke="#35241a"/></svg>
          </div>
          <div class="rowB">
            <div class="btn first"><svg viewBox="0 0 16 16"><path d="M5.500 1.500h5v4h4v5h-4v4h-5v-4h-4v-5h4z" fill="#fff" stroke="#4f874f"/><path d="M8 3.500v9M3.500 8h9" stroke="#4f874f" stroke-width="2"/></svg></div>
            <div class="btn"><svg viewBox="0 0 16 16"><path d="M1.500 5.500h13v5h-13z" fill="#fff" stroke="#aaa"/><path d="M3.500 8h9" stroke="#aaa" stroke-width="2"/></svg></div>
            <div class="btn"><svg viewBox="0 0 16 16"><path d="M5 4.500q0-3.500 3-3.500 4 0 4 3.500V8" fill="none" stroke="#b5b5b5" stroke-width="2"/><rect x="2.500" y="8" width="11" height="7" rx="1" fill="#c8c8c8" stroke="#b0b0b0"/></svg></div>
            <div class="btn"><svg viewBox="0 0 16 16"><path d="M1.500 4v10.500H11" fill="none" stroke="#999" stroke-width="2"/><path d="M3.500 2.500h11v10h-11z" fill="#f2f2f2" stroke="#aaa"/><path d="M10.500 9h4v4h-4z" fill="#ddd" stroke="#bbb"/></svg></div>
            <div class="btn"><svg viewBox="0 0 16 16"><path d="M1.500 13h13L8 2.500z" fill="#b5b5b5" stroke="#8f8f8f"/></svg></div>
            <div class="btn"><svg viewBox="0 0 16 16"><path d="M1.500 3h13L8 13.500z" fill="#b5b5b5" stroke="#8f8f8f"/></svg></div>
          </div>
          <hr>
          <div class="row unit"><label>Unit</label><div class="btn combo"><span>Millimeter</span><b><svg><use href="#dn"/></svg></b></div></div>
          <div class="row transp"><label>Transparency 0%</label><div class="slider"><svg><use href="#handle"/></svg><i></i></div></div>
          <div class="row color"><label>Color</label><div class="colbtn"><i></i></div><div class="btn coldrop"><svg><use href="#dn"/></svg></div></div>
          <div class="row size"><label>Size</label><div class="field spin"><span>2.00000</span><b><svg><use href="#up"/></svg><svg><use href="#dn"/></svg></b></div><svg class="dd"><use href="#ddef"/></svg></div>
          <div class="row rota"><label>Rotation</label><div class="field spin"><span>0.00 °</span><b><svg><use href="#up"/></svg><svg><use href="#dn"/></svg></b></div><svg class="dd"><use href="#ddef"/></svg></div>
          <hr class="h2">
          <div class="row group"><label>Symbols in group</label><div class="field combo"><span></span><b><svg><use href="#dn"/></svg></b></div><div class="btn lib">Open Library</div></div>
          <div class="symlist"><div class="btn"><svg><use href="#up"/></svg></div></div>
        </div>
        <div class="vscroll"><b class="end"><svg><use href="#up"/></svg></b><b class="thumb"><i class="hdots"></i></b><b class="track"></b><b class="end"><svg><use href="#up"/></svg></b><b class="end"><svg><use href="#dn"/></svg></b></div>
      </div>
      <div class="lr"><svg viewBox="0 0 12 8"><path d="M.5.500h11L8 7H4z" fill="#333"/></svg><b>Layer rendering</b><i></i></div>
      <div class="f lt1"><label>Layer transparency</label><div class="slider"><svg><use href="#handle"/></svg><i></i></div><div class="field spin"><span>0</span><b><svg><use href="#up"/></svg><svg><use href="#dn"/></svg></b></div></div>
      <div class="f lb1"><label>Layer blending mode</label><div class="btn combo"><span>Normal</span><b><svg><use href="#dn"/></svg></b></div></div>
      <div class="f lb2"><label>Feature blending mode</label><div class="btn combo"><span>Normal</span><b><svg><use href="#dn"/></svg></b></div></div>
      <div class="f ck1"><i class="chk"></i><span>Draw effects</span><div class="btn sq"><svg viewBox="0 0 16 16"><path d="m7 1 1.800 4.500 4.700.3-3.700 3 1.300 4.700-4.100-2.600-4 2.600L4.200 9 .5 6l4.700-.5z" fill="#ccc" stroke="#aaa"/><path d="M12 14V9q0-2 3-2M6 13h3" fill="none" stroke="#888"/></svg></div></div>
      <div class="f ck2"><i class="chk"></i><span>Control feature rendering order</span><div class="btn sq"><svg viewBox="0 0 16 16"><text x="0" y="7" class="az">A</text><text x="0" y="14" class="az">Z</text><path d="M9.500 1.500h2V9H15l-4.500 5L6.500 9h3z" fill="#aaa"/></svg></div></div>
      <div class="dbuttons"><div class="btn sty">Style<svg><use href="#dn"/></svg></div><div class="btn ok">OK</div><div class="btn">Cancel</div><div class="btn">Apply</div><div class="btn">Help</div></div>
      <i class="splitdots"></i>
    </section>
  </div>
</div>
</body>
</html>
```
FILE: styles.css
```css
* { box-sizing: border-box; }
body { margin: 0; width: 1280px; height: 720px; overflow: hidden; position: relative; display: flex; flex-direction: column; background: #efefef; color: #000; font: 11px/16px "DejaVu Sans Condensed", "Noto Sans", sans-serif; letter-spacing: -.1px; white-space: nowrap; }
svg { display: block; flex: none; }
.defs { position: absolute; }
i, em { display: block; font-style: normal; flex: none; }
b { flex: none; }
.i16 { width: 16px; height: 16px; }

.titlebar { height: 24px; background: #fff; display: flex; align-items: center; padding-left: 2px; padding-bottom: 2px; color: #999; font: 12px "Open Sans", sans-serif; letter-spacing: -.4px; flex: none; }
.titlebar span { margin-left: 5px; }
.winctl { width: 110px; height: 20px; margin-left: auto; margin-right: 14px; }
.menubar { height: 22px; display: flex; align-items: center; padding: 2px 0 0 9px; border-bottom: 1px solid #b8b8b8; flex: none; letter-spacing: -.05px; }
.menubar span:nth-child(1) { width: 49px; }
.menubar span:nth-child(2) { width: 33px; }
.menubar span:nth-child(3) { width: 37px; }
.menubar span:nth-child(4) { width: 42px; }
.menubar span:nth-child(5) { width: 54px; }

.toolbar { height: 39px; display: flex; align-items: center; padding: 0 0 2px 6px; border-top: 1px solid #fbfbfb; border-bottom: 1px solid #b8b8b8; flex: none; }
.toolbar svg { width: 24px; height: 24px; margin-right: 11px; }
.t1 .vgrip { margin-right: 5px; }
.vgrip { width: 6px; height: 28px; background: radial-gradient(circle at 1px 1px, #c4c4c4 1px, transparent 1.2px) 0 0/6px 6px, radial-gradient(circle at 1px 1px, #c4c4c4 1px, transparent 1.2px) 3px 3px/6px 6px; }
.hgrip { height: 6px; background: radial-gradient(circle at 1px 1px, #c4c4c4 1px, transparent 1.2px) 0 0/6px 6px, radial-gradient(circle at 1px 1px, #c4c4c4 1px, transparent 1.2px) 3px 3px/6px 6px; }
.t1 svg + .vgrip { margin-left: 3px; margin-right: 4px; }
.toolbar .arr, .arr { width: 9px; height: 5px; margin: 0; }
.gray { opacity: .45; }
.off { filter: grayscale(1); opacity: .55; }
.tbright { margin-left: auto; display: flex; align-items: center; width: 122px; }
.tbright .cut { width: 8px; height: 16px; margin: 0; }
.tbright .arr { margin: 0 8px 0 7px; }
.tbright .vgrip { margin-right: 6px; }
.tbright .book { width: 21px; height: 22px; margin: 0 0 0 3px; }
.bookq { font: 15px "Liberation Serif", serif; fill: #fff; }
.t2 .vgrip { margin-right: 5px; }
.t2 svg { margin-right: 12px; }
.t2 svg:nth-of-type(1) { margin-right: 9px; }
.t2 svg:nth-of-type(5) { margin-right: 4px; }
.t2 .arr { margin-right: 10px; }

.work { flex: none; height: 524px; display: flex; }
.lefttools { width: 52px; border-right: 1px solid #b0b0b0; padding: 6px 0 0 5px; height: 526px; }
.lefttools .hgrip { width: 42px; }
.lefttools .last { margin: 7px 0 0; }
.lefttools div { height: 34px; display: flex; align-items: center; padding-left: 3px; }
.lefttools div svg { width: 26px; height: 26px; }
.lefttools div .arr { width: 10px; height: 6px; margin: -2px 0 0 3px; }
.panels { width: 294px; display: flex; flex-direction: column; padding-left: 1px; }
.ptitle { height: 19px; display: flex; align-items: center; padding-left: 1px; }
.ptitle .hgrip:first-child { width: 90px; margin-right: 10px; }
.ptitle .hgrip:last-child { flex: 1; }
.ptitle span { width: 69px; font-size: 10.500px; letter-spacing: -.45px; }
.lay .hgrip:first-child { width: 96px; margin-right: 8px; }
.lay span { width: 61px; }
.ptools { height: 33px; display: flex; align-items: center; padding: 0 0 1px 7px; }
.ptools svg { width: 16px; height: 16px; margin-right: 11px; }
.ptools .eye { width: 18px; margin-right: 9px; }
.tree { background: #fff; border: 1px solid #b0b0b0; position: relative; overflow: hidden; flex: none; }
.guides { position: absolute; left: 0; top: 0; }
.browser { height: 294px; padding-top: 2px; border-bottom: 0; letter-spacing: 0; }
.browser .guides { width: 200px; height: 293px; z-index: 1; }
.r { height: 16px; display: flex; align-items: center; }
.r svg:not(.guides) { width: 14px; height: 16px; margin-right: 5px; }
.l0 { padding-left: 25px; } .l1 { padding-left: 45px; } .l2 { padding-left: 65px; } .l3 { padding-left: 83px; }
.l3 svg:not(.guides) { width: 16px; height: 12px; fill: #dedede; stroke: #999; margin-top: -3px; }
.sel { background: #efefef; }
.l3.sel svg:not(.guides) { fill: #a9cdee; stroke: #6b93bb; }
.hscroll { height: 17px; display: flex; border: 1px solid #999; flex: none; }
.hscroll b { width: 16px; display: flex; align-items: center; justify-content: center; background: linear-gradient(#fff, #ddd); border-right: 2px solid #888; }
.hscroll svg { width: 4px; height: 8px; }
.hscroll .thumb { flex: 1; border: 0; padding-right: 58px; }
.hdots { width: 19px; height: 9px; background: radial-gradient(circle at 1px 1px, #aaa .8px, transparent 1px) 0 0/4px 4px; }
.splith { height: 7px; padding: 2px 0 0 96px; flex: none; }
.splith .hgrip { width: 95px; height: 3px; }
.ptools.lt { height: 32px; padding-bottom: 0; }
.lt .arr { width: 10px; height: 6px; margin: 0 8px 0 -6px; }
.layers { flex: 1; font-weight: bold; letter-spacing: .17px; padding-top: 2px; }
.layers .guides { width: 200px; height: 100px; }
.layers .r { padding-left: 23px; }
.layers .chk, .layers .sw { margin-top: -1px; }
.chk { width: 13px; height: 13px; border: 1px solid #b4b4b4; border-radius: 1px; background: #fff; position: relative; }
.chk.on { background: linear-gradient(45deg, transparent 36%, #000 36% 64%, transparent 64%) 1px 1px/9px 9px no-repeat, linear-gradient(-45deg, transparent 36%, #000 36% 64%, transparent 64%) 1px 1px/9px 9px no-repeat #fff; }
.sw { width: 16px; height: 16px; margin: 0 6px 0 6px; }
.white { border: 1px solid #555; background: #fff; }
.yel { border: 1px dashed #aaa878; background: #ffffcf; }
.dot { position: relative; }
.dot::after { content: ""; position: absolute; left: 4px; top: 4px; width: 7px; height: 7px; border-radius: 4px; border: 1px solid #6a7488; background: #8e8488; }
.map { margin-left: 7px; width: 926px; background: #fff; border: 1px solid #b0b0b0; overflow: hidden; }
.pts { fill: none; marker: url(#pt); }
.pts3 { fill: none; marker: url(#pt3); }

.btn { border: 1px solid #b0b0b0; border-radius: 2px; background: linear-gradient(#fdfdfd, #dedede); display: flex; align-items: center; justify-content: center; flex: none; letter-spacing: -.25px; }
.field { border: 1px solid #adadad; border-radius: 2px; background: #fff; display: flex; align-items: center; flex: none; }
.combo { justify-content: space-between; }
.combo > span { padding-left: 3px; padding-top: 1px; display: flex; align-items: center; letter-spacing: -.45px; }
.combo > b { width: 16px; align-self: stretch; border-left: 1px solid #b0b0b0; display: flex; align-items: center; justify-content: center; background: linear-gradient(#fdfdfd, #e2e2e2); }
.combo > b svg, .spin > b svg, .coldrop svg, .end svg, .symlist svg { width: 8px; height: 4px; }
.spin { justify-content: space-between; }
.spin > span { padding-left: 4px; padding-top: 2px; }
.spin > b { width: 16px; align-self: stretch; border-left: 1px solid #b0b0b0; display: flex; flex-direction: column; align-items: center; justify-content: space-around; background: linear-gradient(#fdfdfd 0 47%, #bbb 47% 52%, #eee 52%); }

.status { height: 32px; display: flex; align-items: center; flex: none; padding: 2px 0 0 452px; }
.status > span { padding-top: 1px; }
.s1 { width: 57px; letter-spacing: 0; }
.coord { width: 121px; height: 20px; justify-content: center; letter-spacing: .05px; padding-top: 1px; }
.s2 { width: 18px; height: 18px; margin: 0 12px 0 4px; }
.s3 { width: 29px; letter-spacing: -.3px; }
.scale { width: 89px; height: 20px; }
.scale > span { letter-spacing: -.05px; }
.s4 { width: 13px; height: 17px; margin: 0 14px 0 7px; }
.s5 { width: 48px; letter-spacing: -.3px; }
.mag, .rot { width: 77px; height: 21px; }
.s6 { width: 51px; margin-left: 8px; }
.status .chk { margin: 0 4px 0 6px; }
.s7 { width: 54px; }
.s8 { width: 16px; height: 16px; margin-right: 3px; }
.s9 { width: 76px; letter-spacing: -.2px; }
.s10 { width: 17px; height: 14px; }

.taskbar { height: 40px; background: #000; color: #fff; display: flex; flex: none; font: 12px/17px "Open Sans", sans-serif; letter-spacing: -.4px; }
.tb { width: 48px; display: flex; align-items: center; justify-content: center; }
.exp { width: 40px; margin: 0 5px 0 6px; border-bottom: 2px solid #94cc56; }
.qg { width: 48px; background: linear-gradient(90deg, #333 45px, #111 45px 46px, #2a2a2a 46px); border-bottom: 2px solid #94cc56; }
.tray { margin-left: auto; display: flex; align-items: center; gap: 8px; }
.tray svg:first-child { margin-right: 2px; }
.eng { margin-left: 2px; width: 28px; }
.clock { width: 72px; display: flex; flex-direction: column; align-items: center; margin: -2px 0 0 -4px; }
.peek { width: 1px; height: 40px; background: #666; margin: 0 4px 0 -4px; }

.dialog { position: absolute; left: 252px; top: 15px; width: 906px; height: 620px; border: 1px solid #5b8c1c; background: #efefef; box-shadow: 0 3px 16px rgba(0,0,0,.4); display: flex; flex-direction: column; }
.dtitle { height: 30px; background: #fff; display: flex; align-items: center; padding: 0 0 2px 8px; font: 12px "Open Sans", sans-serif; letter-spacing: -.41px; flex: none; }
.dtitle span { margin-left: 5px; }
.dtitle b { margin-left: auto; margin-right: 38px; font-weight: 600; }
.dtitle .x { width: 11px; height: 11px; margin-right: 17px; }
.dbody { display: flex; height: 588px; }
.side { width: 150px; background: #5e5e5e; color: #fff; font-size: 11.500px; letter-spacing: -.45px; }
.side div { height: 34px; display: flex; align-items: center; padding-left: 4px; padding-top: 2px; }
.side svg { width: 26px; height: 26px; margin: -1px 6px 0 0; }
.side .cur { background: #efefef; color: #000; }
.side .cur svg { width: 28px; margin-right: 7px; }
.side div:nth-child(8) svg { width: 28px; margin: -1px 5px 0 -1px; }
.abc { font: bold 10.500px "DejaVu Sans", sans-serif; fill: #222; letter-spacing: -.5px; }
.content { flex: 1; padding: 3px 3px 0 6px; position: relative; display: flex; flex-direction: column; }
.renderer { height: 22px; width: 745px; }
.renderer span svg { width: 14px; height: 14px; margin: 0 3px 0 3px; }
.scrollwrap { display: flex; height: 346px; margin-top: 7px; width: 745px; flex: none; }
.scrollarea { width: 729px; height: 346px; overflow: hidden; }
.rowA { display: flex; height: 100px; }
.symtree { width: 362px; border: 1px solid #aaa; border-radius: 2px; background: #fff; position: relative; padding-top: 1px; }
.symtree .guides { width: 100px; height: 40px; }
.symtree .r { padding-left: 27px; letter-spacing: -.5px; }
.symtree .sub { padding-left: 47px; }
.symtree .r b, .symtree .r span { padding-top: 3px; }
.symtree .r svg:not(.guides) { width: 10px; height: 10px; margin-right: 9px; }
.symtree .sub svg:not(.guides) { margin-right: 8px; }
.symtree .r b { letter-spacing: .2px; }
.preview { width: 102px; height: 100px; margin-left: 136px; }
.rowB { display: flex; gap: 6px; margin-top: 9px; }
.rowB .btn { width: 30px; height: 26px; border-color: #8e8e8e; }
.rowB .first { border-color: #b4b4b4; }
.rowB svg { width: 16px; height: 16px; }
hr { border: 0; height: 1px; background: #909090; margin: 9px 0 0; }
.row { display: flex; align-items: center; }
label { flex: none; padding-top: 1px; margin-left: -1px; letter-spacing: -.2px; }
.row label { width: 91px; }
.unit { margin-top: 9px; } .unit .btn { width: 639px; height: 20px; }
.transp { margin-top: 5px; height: 17px; } .transp .slider { width: 639px; }
.transp label { letter-spacing: .1px; padding-top: 2px; }
.slider { display: flex; align-items: center; }
.slider svg { width: 12px; height: 16px; }
.slider i { flex: 1; height: 4px; border: 1px solid #888; background: #fafafa; margin-top: -1px; }
.color { margin-top: 5px; height: 22px; }
.colbtn { width: 626px; height: 22px; border: 1px solid #888; border-radius: 2px; background: #f6f6f6; padding: 2px 3px 3px 4px; }
.colbtn i { height: 16px; border-radius: 2px; background: #bd8255; }
.coldrop { width: 13px; height: 20px; border-color: #888; }
.size { margin-top: 13px; height: 22px; } .rota { margin-top: 11px; height: 22px; }
.row.size label, .row.rota label { width: 49px; padding: 0; margin-top: -2px; letter-spacing: 0; }
.row.rota label { margin-top: 0; }
.size .field, .rota .field { width: 644px; height: 22px; letter-spacing: 0; }
.size .field span, .rota .field span { padding-top: 3px; }
.dd { width: 22px; height: 18px; margin-left: 10px; }
hr.h2 { margin-top: 6px; }
.group { margin-top: 6px; height: 24px; }
.row.group label { width: 85px; }
.group .field { width: 567px; height: 20px; }
.lib { width: 75px; height: 24px; margin-left: 3px; padding: 1px 2px 0 0; letter-spacing: -.15px; }
.symlist { margin-top: 4px; height: 40px; background: #fff; border: 1px solid #aaa; display: flex; justify-content: flex-end; padding-top: 1px; }
.symlist .btn { width: 16px; height: 13px; }
.vscroll { width: 16px; display: flex; flex-direction: column; }
.vscroll b { border: 1px solid #888; border-radius: 2px; display: flex; align-items: center; justify-content: center; background: linear-gradient(90deg, #fff, #dcdcdc); }
.end { height: 16px; }
.vscroll .thumb { height: 227px; }
.vscroll .hdots { width: 11px; height: 19px; }
.vscroll .track { flex: 1; border: 0; background: repeating-conic-gradient(#ddd 0 25%, #f6f6f6 0 50%) 0 0/2px 2px; }
.lr { display: flex; align-items: center; height: 20px; margin-top: 10px; color: #333; padding-left: 2px; }
.lr svg { width: 12px; height: 8px; margin-right: 7px; }
.lr b { width: 97px; font-size: 11.500px; letter-spacing: -.2px; }
.lr i { width: 627px; height: 1px; background: #888; margin-top: -5px; }
.f { display: flex; align-items: center; flex: none; }
.f label { width: 187px; }
.lt1 { margin-top: 3px; height: 20px; }
.lt1 label { letter-spacing: -.1px; }
.lt1 .slider { width: 503px; }
.lt1 .field { width: 46px; height: 20px; margin-left: 7px; }
.lt1 .field span { padding-top: 1px; }
.lb1 { margin-top: 6px; } .lb2 { margin-top: 7px; }
.f .combo { width: 181px; height: 20px; }
.ck1 { margin-top: 7px; height: 25px; } .ck2 { margin-top: 6px; height: 25px; }
.f .chk { margin-right: 4px; margin-top: -2px; }
.ck1 span { letter-spacing: 0; }
.sq { width: 26px; height: 25px; margin: 0 3px 0 auto; border-color: #888; }
.sq svg { width: 16px; height: 16px; }
.az { font: bold 8px "DejaVu Sans", sans-serif; fill: #888; }
.dbuttons { display: flex; gap: 10px; margin-top: 15px; }
.dbuttons .btn { width: 75px; height: 23px; padding-top: 2px; padding-right: 1px; }
.dbuttons .sty { margin-right: 330px; padding-left: 12px; gap: 20px; }
.sty svg { width: 6px; height: 4px; margin-top: -3px; }
.dbuttons .ok { border-color: #666; }
.splitdots { position: absolute; left: 2px; top: 194px; width: 3px; height: 200px; background: radial-gradient(circle at 1px 1px, #bbb 1px, transparent 1.200px) 0 0/3px 5px; }
```
